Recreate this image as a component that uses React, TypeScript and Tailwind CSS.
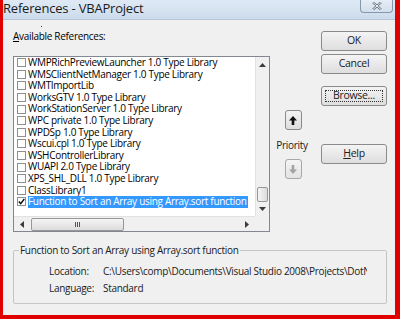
import { ReactNode } from 'react';

const items = [
    'WMPRichPreviewLauncher 1.0 Type Library',
    'WMSClientNetManager 1.0 Type Library',
    'WMTImportLib',
    'WorksGTV 1.0 Type Library',
    'WorkStationServer 1.0 Type Library',
    'WPC private 1.0 Type Library',
    'WPDSp 1.0 Type Library',
    'Wscui.cpl 1.0 Type Library',
    'WSHControllerLibrary',
    'WUAPI 2.0 Type Library',
    'XPS_SHL_DLL 1.0 Type Library',
    'ClassLibrary1',
    'Function to Sort an Array using Array.sort function',
];

function Button({ children, mt, focus }: { children: ReactNode; mt: string; focus?: boolean }) {
    return (
        <div className={`${mt} relative h-[20px] w-[66px] rounded-[3px] border border-[#8a8a8a] bg-gradient-to-b from-[#f4f4f4] to-[#dedede] flex items-center justify-center text-[10.5px] text-[#202020]`}>
            {focus && <div className="absolute inset-[3px] border border-dotted border-[#333]" />}
            <span className="relative">{children}</span>
        </div>
    );
}

function Tri({ dir }: { dir: 'up' | 'down' | 'left' | 'right' }) {
    const pts = {
        up: '0,4 3.5,0 7,4',
        down: '0,0 3.5,4 7,0',
        left: '4,0 0,3.5 4,7',
        right: '0,0 4,3.5 0,7',
    }[dir];
    const vertical = dir === 'up' || dir === 'down';
    return (
        <svg width={vertical ? 7 : 4} height={vertical ? 4 : 7} viewBox={vertical ? '0 0 7 4' : '0 0 4 7'}>
            <polygon points={pts} fill="#3c3c3c" />
        </svg>
    );
}

export default function App() {
    return (
        <div className="w-[400px] h-[319px] bg-[#e00000] pl-[3px] pr-[5px] pb-[4px] flex flex-col font-['Open_Sans',sans-serif] text-[10px] tracking-[-0.3px] text-black">
            <div className="flex-1 flex flex-col bg-[#f0f0f0]">
                <div className="h-[20px] flex items-start bg-gradient-to-b from-[#dfe9f5] via-[#d6e3f1] to-[#cbdbec] border-b border-[#b7c6d6]">
                    <span className="text-[13px] leading-[17px] tracking-[-0.2px] text-[#1b1b1b]">References - VBAProject</span>
                    <div className="ml-auto mr-[2px] w-[33px] h-[13px] rounded-b-[4px] border border-t-0 border-[#8797ab] bg-gradient-to-b from-[#e6edf5] to-[#d2dfec] flex items-center justify-center">
                        <svg width="10" height="8" viewBox="0 0 10 8">
                            <path d="M1 0.5 L9 7.5 M9 0.5 L1 7.5" stroke="#59646f" strokeWidth="2.2" />
                            <path d="M1 0.5 L9 7.5 M9 0.5 L1 7.5" stroke="#f4f6f8" strokeWidth="1" />
                        </svg>
                    </div>
                </div>

                <div className="flex-1 pl-[10px] pt-[10px] relative">
                    <div className="absolute left-[38px] top-[6px] w-[1px] h-[1px] bg-[#e00000]" />
                    <div className="flex">
                        <div className="w-[257px]">
                            <div className="h-[12px] leading-[12px]"><span className="underline">A</span>vailable References:</div>
                            <div className="mt-[14px] h-[176px] border border-[#828790] bg-white grid grid-cols-[1fr_14px] grid-rows-[1fr_15px]">
                                <div className="overflow-hidden whitespace-nowrap">
                                    {items.map((item, i) => {
                                        const selected = i === items.length - 1;
                                        return (
                                            <div key={item} className="h-[11.6px] flex items-center">
                                                <div className="ml-[3px] w-[9px] h-[9px] border border-[#8e8f8f] bg-white flex items-center justify-center shrink-0">
                                                    {selected && (
                                                        <svg width="7" height="7" viewBox="0 0 7 7">
                                                            <path d="M0.8 3.6 L2.7 5.6 L6.3 1" stroke="#111" strokeWidth="1.5" fill="none" />
                                                        </svg>
                                                    )}
                                                </div>
                                                <span className={`ml-[2px] h-full leading-[11.6px] ${selected ? 'bg-[#3399ff] text-white pr-[1px]' : ''}`}>{item}</span>
                                            </div>
                                        );
                                    })}
                                </div>
                                <div className="bg-[#f0f0f0] border-l border-[#e2e2e2] flex flex-col">
                                    <div className="h-[15px] flex items-center justify-center"><Tri dir="up" /></div>
                                    <div className="flex-1" />
                                    <div className="h-[15px] mx-[1px] rounded-[2px] border border-[#979797] bg-gradient-to-r from-[#f5f5f5] to-[#dcdcdc]" />
                                    <div className="h-[14px] flex items-center justify-center"><Tri dir="down" /></div>
                                </div>
                                <div className="bg-[#f0f0f0] border-t border-[#e2e2e2] flex items-center">
                                    <div className="w-[16px] flex justify-center"><Tri dir="left" /></div>
                                    <div className="w-[93px] h-[13px] ml-[1px] rounded-[2px] border border-[#979797] bg-gradient-to-b from-[#f5f5f5] to-[#dcdcdc] flex items-center justify-center">
                                        <div className="flex gap-[1px]">
                                            <div className="w-[1px] h-[5px] bg-[#555]" />
                                            <div className="w-[1px] h-[5px] bg-[#555]" />
                                            <div className="w-[1px] h-[5px] bg-[#555]" />
                                        </div>
                                    </div>
                                    <div className="flex-1" />
                                    <div className="w-[17px] flex justify-center"><Tri dir="right" /></div>
                                </div>
                                <div className="bg-[#f0f0f0]" />
                            </div>
                        </div>

                        <div className="ml-[7px] w-[30px] flex flex-col items-center">
                            <div className="mt-[80px] ml-[2px] w-[17px] h-[20px] rounded-[3px] border border-[#8a8a8a] bg-gradient-to-b from-[#f4f4f4] to-[#dedede] flex items-center justify-center">
                                <svg width="8" height="9" viewBox="0 0 8 9">
                                    <path d="M4 0 L8 4.5 L5.3 4.5 L5.3 9 L2.7 9 L2.7 4.5 L0 4.5 Z" fill="#111" />
                                </svg>
                            </div>
                            <div className="mt-[9px] h-[12px] leading-[12px] text-[#202020]">Priority</div>
                            <div className="mt-[8px] ml-[2px] w-[17px] h-[20px] rounded-[3px] border border-[#a8a8a8] bg-gradient-to-b from-[#f4f4f4] to-[#e4e4e4] flex items-center justify-center">
                                <svg width="8" height="9" viewBox="0 0 8 9">
                                    <path d="M4 9 L8 4.5 L5.3 4.5 L5.3 0 L2.7 0 L2.7 4.5 L0 4.5 Z" fill="#a3a3a3" />
                                </svg>
                            </div>
                        </div>

                        <div className="ml-[14px] w-[66px] flex flex-col">
                            <Button mt="mt-[1px]">OK</Button>
                            <Button mt="mt-[3px]">Cancel</Button>
                            <Button mt="mt-[12px]" focus>Browse...</Button>
                            <Button mt="mt-[38px]"><span className="underline">H</span>elp</Button>
                        </div>
                    </div>

                    <fieldset className="mt-[12px] w-[374px] h-[60px] border border-[#c5c5c5] rounded-[2px]">
                        <legend className="ml-[5px] px-[1px] leading-[12px] text-[#202020]">Function to Sort an Array using Array.sort function</legend>
                        <div className="pl-[35px] pt-[9px] grid grid-cols-[54px_1fr] gap-y-[5px] leading-[12px] text-[#202020] whitespace-nowrap">
                            <span>Location:</span>
                            <span className="overflow-hidden w-[264px]">C:\Users\comp\Documents\Visual Studio 2008\Projects\DotNet</span>
                            <span>Language:</span>
                            <span>Standard</span>
                        </div>
                    </fieldset>
                </div>
            </div>
        </div>
    );
}
